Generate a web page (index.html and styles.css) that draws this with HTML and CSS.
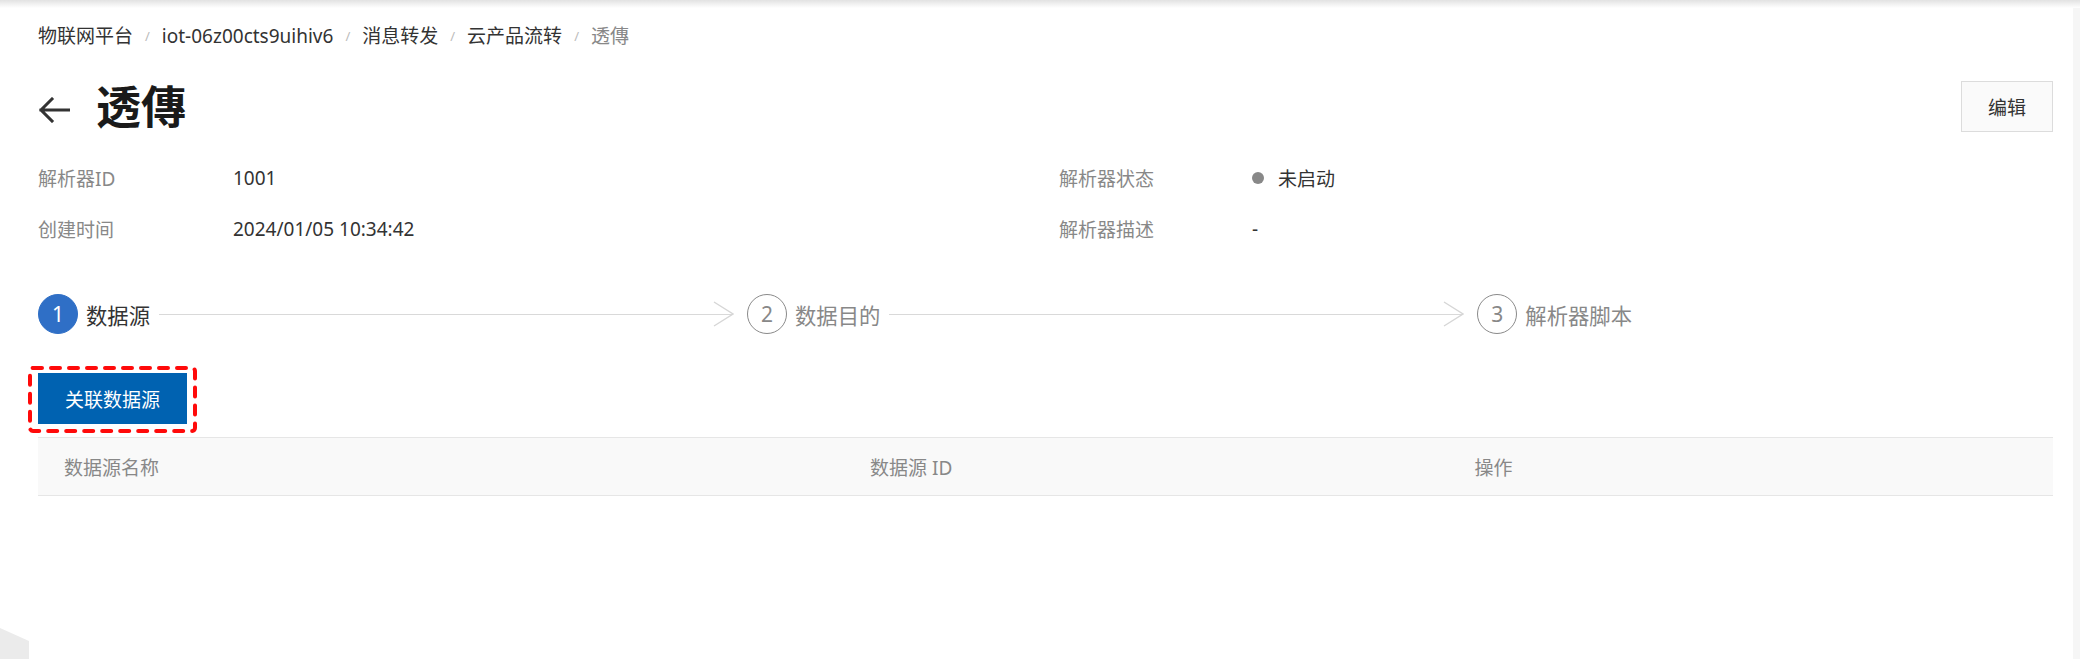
FILE: index.html
```html
<!DOCTYPE html>
<html lang="zh-CN">
<head>
<meta charset="utf-8">
<title>透傳</title>
<link rel="stylesheet" href="styles.css">
</head>
<body>
<div class="top-shade"></div>
<div class="shell">
  <main class="page">
    <nav class="crumbs">
      <span class="crumb">物联网平台</span><span class="sep">/</span>
      <span class="crumb">iot-06z00cts9uihiv6</span><span class="sep">/</span>
      <span class="crumb">消息转发</span><span class="sep">/</span>
      <span class="crumb">云产品流转</span><span class="sep">/</span>
      <span class="crumb current">透傳</span>
    </nav>

    <header class="head">
      <div class="title-wrap">
        <svg class="back" width="32" height="26" viewBox="0 0 32 26" aria-hidden="true">
          <path d="M31 13H3M14 2L3 13l11 11" fill="none" stroke="#333" stroke-width="3" stroke-linecap="square"/>
        </svg>
        <h1 class="title">透傳</h1>
      </div>
      <button class="btn-edit">编辑</button>
    </header>

    <section class="info">
      <div class="label">解析器ID</div>
      <div class="value">1001</div>
      <div class="label">解析器状态</div>
      <div class="value status"><span class="dot"></span>未启动</div>
      <div class="label">创建时间</div>
      <div class="value">2024/01/05 10:34:42</div>
      <div class="label">解析器描述</div>
      <div class="value">-</div>
    </section>

    <ol class="steps">
      <li class="step active">
        <span class="num">1</span><span class="step-title">数据源</span>
        <span class="tail"></span>
        <svg class="chev" width="21" height="26" viewBox="0 0 21 26" aria-hidden="true"><polyline points="1,1 20,13 1,25" fill="none" stroke="#d6d6d6" stroke-width="1.4"/></svg>
      </li>
      <li class="step">
        <span class="num">2</span><span class="step-title">数据目的</span>
        <span class="tail"></span>
        <svg class="chev" width="21" height="26" viewBox="0 0 21 26" aria-hidden="true"><polyline points="1,1 20,13 1,25" fill="none" stroke="#d6d6d6" stroke-width="1.4"/></svg>
      </li>
      <li class="step last">
        <span class="num">3</span><span class="step-title">解析器脚本</span>
      </li>
    </ol>

    <div class="action">
      <button class="btn-primary">关联数据源</button>
      <svg class="mark" width="169" height="67" viewBox="0 0 169 67" aria-hidden="true">
        <rect x="2" y="2" width="165" height="63" rx="3" fill="none" stroke="#ff0a0a" stroke-width="4" stroke-dasharray="9 9" stroke-linecap="round"/>
      </svg>
    </div>

    <table class="tbl">
      <colgroup><col class="c1"><col class="c2"><col class="c3"></colgroup>
      <thead>
        <tr><th>数据源名称</th><th>数据源 ID</th><th>操作</th></tr>
      </thead>
    </table>
  </main>
  <div class="scrollbar"></div>
  <svg class="corner" width="29" height="31" viewBox="0 0 29 31" aria-hidden="true"><polygon points="0,0 29,13 29,31 0,31" fill="#ebebeb"/></svg>
</div>
</body>
</html>
```

FILE: styles.css
```css
* { box-sizing: border-box; }
html, body { margin: 0; padding: 0; background: #fff; }
body {
  font-family: "Noto Sans", "Noto Sans CJK SC", sans-serif;
  font-size: 19px;
  color: #333;
  width: 2080px;
  height: 659px;
  overflow: hidden;
  position: relative;
}
.top-shade {
  height: 8px;
  background: linear-gradient(#e2e2e2, #ffffff);
}
.shell {
  display: flex;
  height: 651px;
}
.page {
  flex: 1;
  padding: 0 20px 0 38px;
}
.scrollbar {
  width: 7px;
  background: #f6f6f6;
}
.corner {
  position: absolute;
  left: 0;
  bottom: 0;
}

/* breadcrumb */
.crumbs {
  margin-top: 14px;
  display: flex;
  align-items: center;
  line-height: 28px;
  height: 28px;
}
.crumb { color: #333; }
.crumb.current { color: #888; }
.sep {
  color: #bbb;
  font-size: 13px;
  margin: 0 12px;
}

/* title row */
.head {
  margin-top: 31px;
  height: 51px;
  display: flex;
  align-items: center;
  justify-content: space-between;
}
.title-wrap {
  display: flex;
  align-items: center;
  gap: 26px;
}
.back { margin-top: 6px; }
.title {
  margin: 0;
  font-size: 45px;
  font-weight: 700;
  line-height: 51px;
  color: #1a1a1a;
}
.btn-edit {
  width: 92px;
  height: 51px;
  border: 1px solid #dcdcdc;
  background: #fafafa;
  color: #333;
  font-family: inherit;
  font-size: 19px;
  padding: 0;
}

/* info */
.info {
  margin-top: 20px;
  display: grid;
  grid-template-columns: 195px 826px 193px 1fr;
  grid-auto-rows: 51px;
  align-items: center;
}
.label { color: #888; }
.value { color: #333; }
.status { display: flex; align-items: center; }
.dot {
  width: 12px;
  height: 12px;
  border-radius: 50%;
  background: #888;
  margin-right: 14px;
}

/* steps */
.steps {
  list-style: none;
  margin: 40px 0 0;
  padding: 0;
  width: 1594px;
  display: flex;
  height: 40px;
}
.step {
  flex: 1 1 auto;
  display: flex;
  align-items: center;
  margin-right: 13px;
}
.step.last { flex: none; margin-right: 0; }
.num {
  width: 40px;
  height: 40px;
  border-radius: 50%;
  border: 1px solid #8a8a8a;
  color: #888;
  font-size: 21px;
  display: flex;
  align-items: center;
  justify-content: center;
  flex: none;
}
.step.active .num {
  background: #2f6fc6;
  border-color: #2f6fc6;
  color: #fff;
}
.step-title {
  margin-left: 8px;
  font-size: 21.33px;
  color: #888;
  white-space: nowrap;
}
.step.active .step-title { color: #333; }
.tail {
  flex: 1 1 0;
  height: 1px;
  background: #d9d9d9;
  margin-left: 9px;
}
.chev {
  flex: none;
  margin-left: -20px;
}

/* action */
.action {
  margin-top: 39px;
  position: relative;
  display: inline-block;
  vertical-align: top;
}
.btn-primary {
  display: block;
  width: 149px;
  height: 51px;
  border: 0;
  padding: 0;
  background: #0062b1;
  color: #fff;
  font-family: inherit;
  font-size: 19px;
}
.mark {
  position: absolute;
  left: -10px;
  top: -7px;
}

/* table */
.tbl {
  margin-top: 13px;
  width: 100%;
  border-collapse: collapse;
  table-layout: fixed;
}
.c1 { width: 40%; }
.c2 { width: 30%; }
.c3 { width: 30%; }
.tbl th {
  height: 58px;
  padding: 0 26px;
  text-align: left;
  font-weight: 400;
  color: #888;
  background: #f9f9f9;
  border-top: 1px solid #e6e6e6;
  border-bottom: 1px solid #e6e6e6;
}
```
